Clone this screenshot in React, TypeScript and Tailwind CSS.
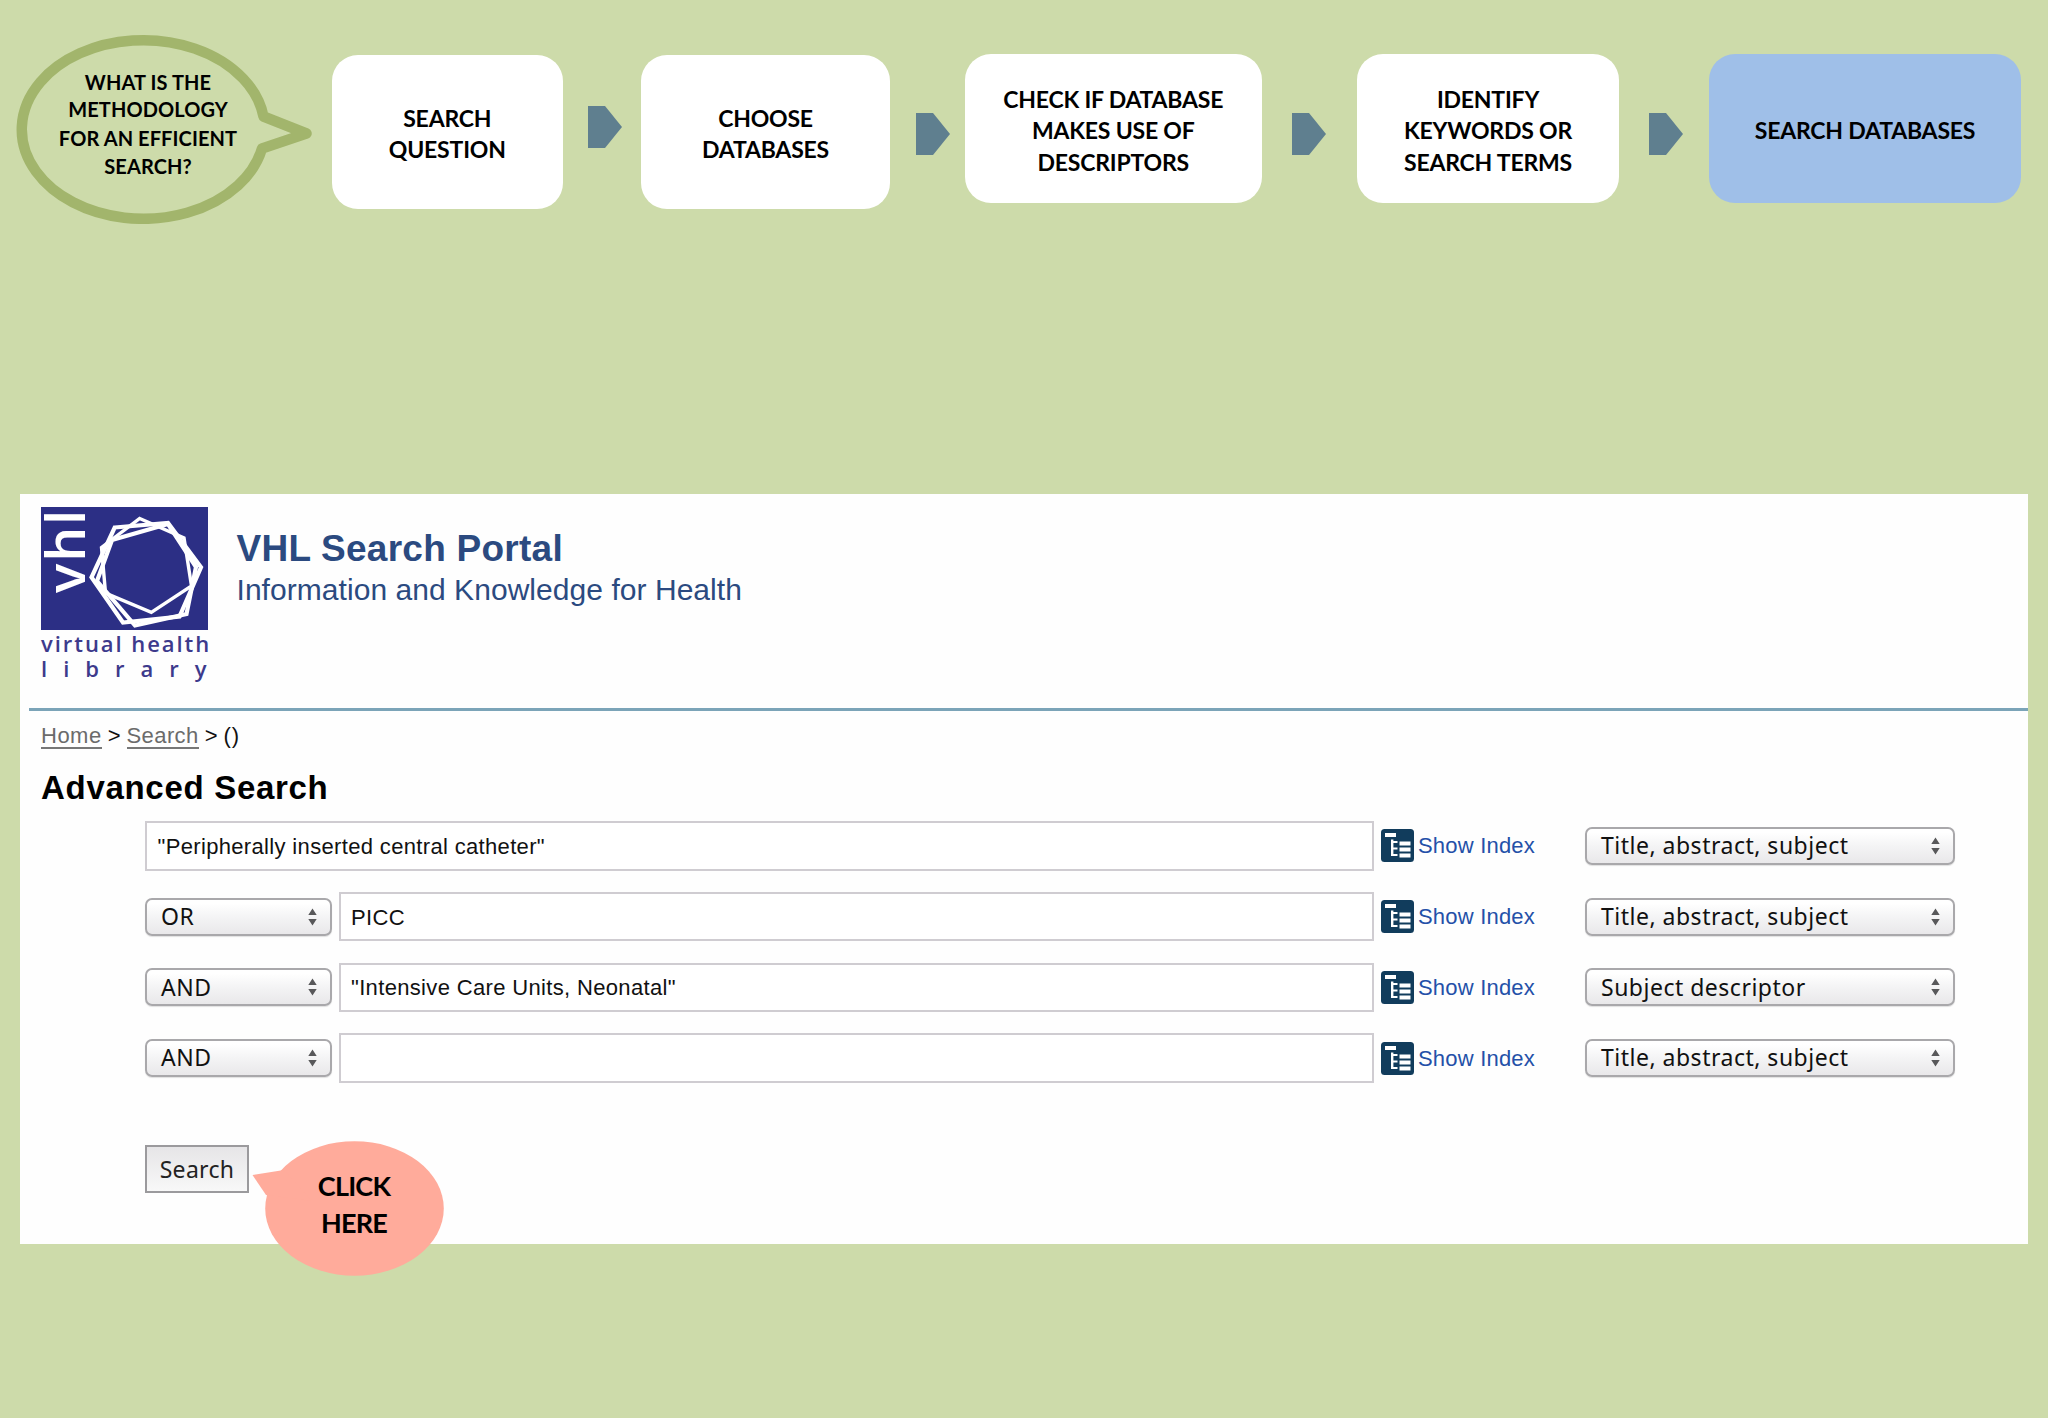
import clsx from 'clsx';

interface SearchRow {
  operator?: string;
  term: string;
  field: string;
}

const searchRows: SearchRow[] = [
  { term: '"Peripherally inserted central catheter"', field: 'Title, abstract, subject' },
  { operator: 'OR', term: 'PICC', field: 'Title, abstract, subject' },
  { operator: 'AND', term: '"Intensive Care Units, Neonatal"', field: 'Subject descriptor' },
  { operator: 'AND', term: '', field: 'Title, abstract, subject' },
];

function StepBox({ lines, className }: { lines: string[]; className: string }) {
  return (
    <div
      className={clsx(
        'flex shrink-0 flex-col items-center justify-center rounded-[26px] pt-[5px] text-[23px] leading-[31.4px] font-bold tracking-[-0.2px] text-black',
        className
      )}
    >
      {lines.map((line) => (
        <span key={line} className="whitespace-nowrap">{line}</span>
      ))}
    </div>
  );
}

function StepArrow({ className }: { className: string }) {
  return (
    <svg viewBox="0 0 34 42" className={clsx('h-[42px] w-[34px] shrink-0', className)}>
      <path d="M0 0H17L34 21L17 42H0Z" fill="#5f7f8f" />
    </svg>
  );
}

function QuestionBubble() {
  return (
    <div className="relative h-[192px] w-[332px] shrink-0">
      <svg viewBox="0 0 332 192" className="absolute inset-0 h-full w-full">
        <path
          d="M263.5 84.5A121.5 89.3 0 1 0 262 116.5L306.5 101.5Z"
          fill="none"
          stroke="#a2b56c"
          strokeWidth="10.5"
          strokeLinejoin="round"
        />
      </svg>
      <div className="relative flex w-[296px] flex-col items-center pt-[36px] text-[20px] leading-[28.5px] font-bold tracking-[0.1px] text-black">
        <span className="-mb-[1.5px]">WHAT IS THE</span>
        <span>METHODOLOGY</span>
        <span>FOR AN EFFICIENT</span>
        <span>SEARCH?</span>
      </div>
    </div>
  );
}

function VhlLogo() {
  return (
    <div className="w-[167px] shrink-0 text-[#3d3a8c]">
      <svg viewBox="0 0 167 123" className="block h-[123px] w-[167px]">
        <rect width="167" height="123" fill="#2c2f85" />
        <text
          transform="translate(44 86) rotate(-90)"
          fill="#ffffff"
          fontFamily="Open Sans, sans-serif"
          fontSize="55"
          fontWeight="600"
          letterSpacing="1.8"
        >
          vhl
        </text>
        <g fill="none" stroke="#ffffff" strokeWidth="4.2">
          <path d="M73.7 20.5L127 16L160 60.3L138.5 109.5L82 115.5L50.5 70.3Z" />
          <path d="M98.7 11.5L143 31L150.5 79L110.3 105.3L64.5 86L60.5 40.5Z" strokeWidth="3.4" />
          <path d="M71 33L127 17L155 60L145.5 107L94 118.5L56 74Z" />
        </g>
      </svg>
      <div className="pt-[1.5px] font-['Open_Sans',sans-serif] text-[22px] leading-[24.6px] font-semibold whitespace-nowrap">
        <div className="tracking-[1.95px]">virtual health</div>
        <div className="tracking-[16px]">library</div>
      </div>
    </div>
  );
}

function IndexIcon() {
  return (
    <svg viewBox="0 0 33 33" className="h-[33px] w-[33px] shrink-0">
      <rect width="33" height="33" rx="3.5" fill="#113c5c" />
      <g fill="#ffffff">
        <rect x="4" y="4" width="11" height="4" />
        <rect x="10" y="10.5" width="2.4" height="16.5" />
        <rect x="10" y="12" width="6.5" height="2" />
        <rect x="10" y="18.5" width="6.5" height="2" />
        <rect x="10" y="25" width="6.5" height="2" />
        <rect x="18.5" y="12.5" width="11" height="4" />
        <rect x="18.5" y="18.5" width="11" height="4" />
        <rect x="18.5" y="24.5" width="11" height="4" />
      </g>
    </svg>
  );
}

function Select({ value, className }: { value: string; className: string }) {
  return (
    <button
      className={clsx(
        "flex h-[38px] shrink-0 items-center justify-between rounded-[7px] border-2 border-[#a9a8ab] bg-linear-to-b from-white from-10% via-[#f4f4f5] via-50% to-[#e9e8ea] pr-[13px] pl-[14px] font-['Noto_Sans',sans-serif] text-[23px] tracking-[0.5px] text-[#111] shadow-[0_1px_1px_rgba(0,0,0,0.12)]",
        className
      )}
    >
      <span className="-mt-px">{value}</span>
      <svg viewBox="0 0 9 18" className="h-[18px] w-[9px]">
        <path d="M4.5 0.5L8.7 7H0.3ZM4.5 17.5L8.7 11H0.3Z" fill="#58585a" />
      </svg>
    </button>
  );
}

export default function App() {
  return (
    <div className="h-[1418px] w-[2048px] overflow-hidden bg-[#cddbaa] font-['Lato',sans-serif]">
      <header className="flex h-[494px] items-start pt-[32px]">
        <QuestionBubble />
        <StepBox lines={['SEARCH', 'QUESTION']} className="mt-[22.5px] h-[154.5px] w-[230.5px] bg-white" />
        <StepArrow className="mt-[74px] mr-[19px] ml-[25.5px]" />
        <StepBox lines={['CHOOSE', 'DATABASES']} className="mt-[22.5px] h-[154.5px] w-[249px] bg-white" />
        <StepArrow className="mt-[81px] mr-[14.5px] ml-[26px]" />
        <StepBox
          lines={['CHECK IF DATABASE', 'MAKES USE OF', 'DESCRIPTORS']}
          className="mt-[22px] h-[149px] w-[297.5px] bg-white"
        />
        <StepArrow className="mt-[81px] mr-[31px] ml-[30px]" />
        <StepBox
          lines={['IDENTIFY', 'KEYWORDS OR', 'SEARCH TERMS']}
          className="mt-[22px] h-[149px] w-[262px] bg-white"
        />
        <StepArrow className="mt-[81px] mr-[26px] ml-[30px]" />
        <StepBox lines={['SEARCH DATABASES']} className="mt-[22px] h-[149px] w-[312px] bg-[#9fbfe8]" />
      </header>

      <main className="relative ml-[20px] h-[749.5px] w-[2007.5px] bg-[#fefefe] font-['Liberation_Sans',Arial,sans-serif] text-[22px] text-[#111]">
        <div className="flex h-[214px] pt-[12.5px] pl-[21px]">
          <VhlLogo />
          <div className="pt-[20.5px] pl-[28.5px] text-[#2b4a80]">
            <h1 className="text-[37px] leading-[43px] font-bold tracking-[0.25px]">VHL Search Portal</h1>
            <p className="text-[30px] leading-[40px] tracking-[0.05px]">Information and Knowledge for Health</p>
          </div>
        </div>
        <div className="ml-[9px] h-[2.5px] bg-[#7ba4b8]" />

        <nav className="flex gap-[6px] pt-[12px] pl-[21px] leading-[26px]">
          <a className="h-[26px] border-b-2 border-[#777] tracking-[0.5px] text-[#6b6b6b]">Home</a>
          <span>&gt;</span>
          <a className="h-[26px] border-b-2 border-[#777] tracking-[0.4px] text-[#6b6b6b]">Search</a>
          <span>&gt;</span>
          <span className="tracking-[0.8px]">()</span>
        </nav>
        <h2 className="pt-[19.5px] pl-[21px] text-[33px] leading-[40px] font-bold tracking-[0.7px] text-black">
          Advanced Search
        </h2>

        <form className="flex flex-col gap-[21.3px] pt-[13px] pl-[125px]">
          {searchRows.map((row, idx) => (
            <div key={idx} className="flex h-[49.5px] items-center">
              {row.operator && <Select value={row.operator} className="mr-[7px] w-[186.5px]" />}
              <div
                className={clsx(
                  'flex h-full shrink-0 items-center border-2 border-[#cfccd1] bg-white pt-px pl-[10.5px] tracking-[0.34px]',
                  row.operator ? 'w-[1035.5px]' : 'w-[1229px]'
                )}
              >
                {row.term}
              </div>
              <a className="ml-[6.5px] flex w-[204.5px] shrink-0 items-center gap-[4.5px] tracking-[0.2px] text-[#2450a8]">
                <IndexIcon />
                Show Index
              </a>
              <Select value={row.field} className="w-[370px]" />
            </div>
          ))}
          <button className="mt-[41px] flex h-[48px] w-[104px] items-center justify-center border-2 border-[#9b9a9d] bg-linear-to-b from-[#e6e5e7] to-[#f8f8f8] font-['Noto_Sans',sans-serif] text-[23px] tracking-[0.3px] text-[#222]">
            Search
          </button>
        </form>

        {/* callout pointing at the Search button */}
        <div className="absolute top-[646.5px] left-[231.5px] h-[135px] w-[192px]">
          <svg viewBox="0 0 192 135" className="absolute inset-0 h-full w-full">
            <ellipse cx="102.5" cy="67.5" rx="89.3" ry="67.2" fill="#ffab9b" />
            <path d="M0.5 34L32 29L60 60L14 54Z" fill="#ffab9b" />
          </svg>
          <div className="relative flex flex-col items-center pt-[27.5px] pl-[13px] font-['Lato',sans-serif] text-[27px] leading-[36.7px] font-bold tracking-[-0.8px] text-black">
            <span>CLICK</span>
            <span>HERE</span>
          </div>
        </div>
      </main>
    </div>
  );
}
